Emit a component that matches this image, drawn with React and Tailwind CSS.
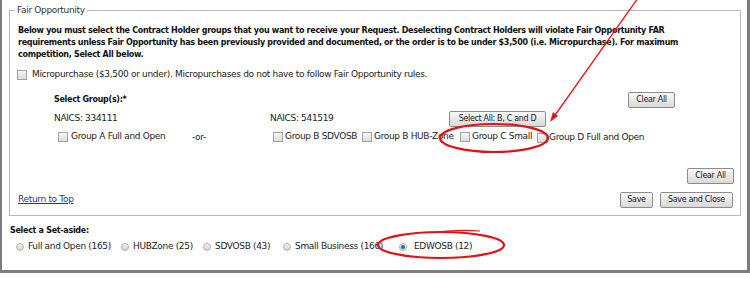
import React from 'react';

function Box() {
  return (
    <span className="inline-block w-[10px] h-[10px] shrink-0 border border-[#a3a3a3] bg-gradient-to-b from-[#f6f6f6] to-[#dcdcdc]" />
  );
}

function Radio({ on }) {
  return (
    <span className="relative inline-flex w-[8px] h-[8px] shrink-0 rounded-full border border-[#b0b0b0] bg-gradient-to-b from-[#f2f2f2] to-[#d4d4d4] items-center justify-center">
      {on && <span className="w-[4px] h-[4px] rounded-full bg-[#1d6fa8]" />}
    </span>
  );
}

function Btn({ children, w }) {
  return (
    <button className={`h-[16px] ${w} border border-[#8c8c8c] rounded-[2px] bg-gradient-to-b from-[#f8f8f8] to-[#d9d9d9] text-[8px] text-[#222] leading-none whitespace-nowrap`}>
      {children}
    </button>
  );
}

function Check({ children, gap = 'gap-[3px]' }) {
  return (
    <span className={`inline-flex items-center whitespace-nowrap ${gap}`}>
      <Box />
      <span>{children}</span>
    </span>
  );
}

export default function App() {
  return (
    <div className="relative w-[750px] h-[285px] bg-white overflow-hidden font-['DejaVu_Sans',sans-serif] tracking-[-0.33px] text-[#222]">
      <div className="h-[273px] border-l-2 border-r-[3px] border-b-[3px] border-[#7c7c7c] pt-[3px]">
        {/* Fair Opportunity */}
        <fieldset className="ml-[7px] w-[732px] pb-[7px] border border-[#b8b8b8]">
          <legend className="ml-[5px] px-[2px] text-[9px] leading-[14px] text-[#333]">Fair Opportunity</legend>

          <p className="mt-[8px] pl-[8px] pr-[40px] text-[8px] tracking-[-0.3px] font-bold leading-[12px] text-[#111]">
            Below you must select the Contract Holder groups that you want to receive your Request. Deselecting Contract Holders will violate Fair Opportunity FAR requirements unless Fair Opportunity has been previously provided and documented, or the order is to be under $3,500 (i.e. Micropurchase). For maximum competition, Select All below.
          </p>

          <div className="mt-[8px] pl-[7px] h-[12px] flex items-center text-[9px]">
            <Check gap="gap-[5px]">Micropurchase ($3,500 or under). Micropurchases do not have to follow Fair Opportunity rules.</Check>
          </div>

          <div className="mt-[11px] h-[16px] flex items-center pl-[44px] pr-[65px]">
            <span className="text-[8px] tracking-[-0.3px] font-bold text-[#111]">Select Group(s):*</span>
            <span className="ml-auto flex"><Btn w="w-[47px]">Clear All</Btn></span>
          </div>

          <div className="mt-[3px] h-[16px] flex items-center pl-[44px] text-[9px]">
            <span className="w-[216px]">NAICS: 334111</span>
            <span className="w-[179px]">NAICS: 541519</span>
            <Btn w="w-[97px]">Select All: B, C and D</Btn>
          </div>

          <div className="mt-[5px] h-[12px] flex items-center pl-[48px] text-[9px]">
            <span className="w-[134px]"><Check>Group A Full and Open</Check></span>
            <span className="w-[81px]">-or-</span>
            <span className="w-[89px]"><Check gap="gap-[2px]">Group B SDVOSB</Check></span>
            <span className="w-[98px]"><Check gap="gap-[2px]">Group B HUB-Zone</Check></span>
            <span className="w-[77px]"><Check gap="gap-[2px]">Group C Small</Check></span>
            <Check gap="gap-[2px]">Group D Full and Open</Check>
          </div>

          <div className="mt-[24px] h-[16px] flex justify-end pr-[6px]">
            <Btn w="w-[47px]">Clear All</Btn>
          </div>

          <div className="mt-[8px] h-[16px] flex items-center pl-[8px] pr-[7px] text-[9px]">
            <a href="#top" className="text-[#2233bb] underline">Return to Top</a>
            <span className="ml-auto flex gap-[7px]">
              <Btn w="w-[33px]">Save</Btn>
              <Btn w="w-[73px]">Save and Close</Btn>
            </span>
          </div>
        </fieldset>

        {/* Set-aside */}
        <div className="mt-[9px] pl-[8px] text-[8px] tracking-[-0.3px] font-bold leading-[12px] text-[#111]">Select a Set-aside:</div>
        <div className="mt-[4px] pl-[14px] h-[12px] flex items-center text-[9px] whitespace-nowrap">
          <span className="w-[105px] flex items-center gap-[4px]"><Radio />Full and Open (165)</span>
          <span className="w-[82px] flex items-center gap-[4px]"><Radio />HUBZone (25)</span>
          <span className="w-[80px] flex items-center gap-[4px]"><Radio />SDVOSB (43)</span>
          <span className="w-[116px] flex items-center gap-[4px]"><Radio />Small Business (166)</span>
          <span className="flex items-center gap-[7px]"><Radio on />EDWOSB (12)</span>
        </div>
      </div>

      {/* red annotation marks */}
      <svg className="absolute inset-0 pointer-events-none" width="750" height="285" viewBox="0 0 750 285">
        <line x1="638" y1="-2" x2="553" y2="118" stroke="#e8141a" strokeWidth="1.3" />
        <polygon points="550,122 558,116 553,112" fill="#e8141a" />
        <ellipse cx="494" cy="138" rx="54" ry="14" fill="none" stroke="#e31217" strokeWidth="2.2" />
        <ellipse cx="441" cy="245" rx="63" ry="13" fill="none" stroke="#e31217" strokeWidth="2.2" />
        <path d="M436 232 C 455 230, 470 230, 480 231" fill="none" stroke="#e31217" strokeWidth="1.2" />
      </svg>
    </div>
  );
}
